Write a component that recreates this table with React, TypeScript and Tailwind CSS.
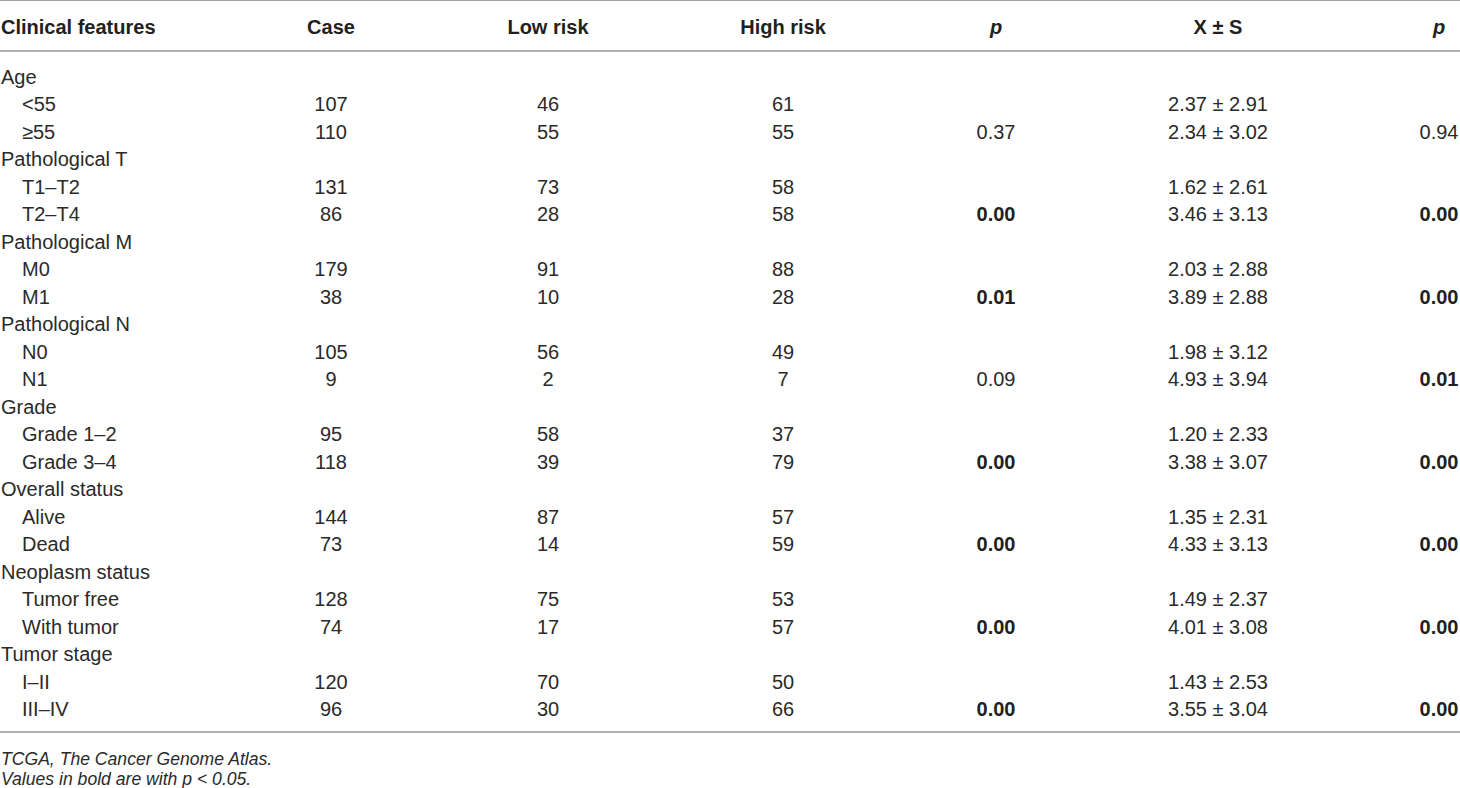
import React from "react";

type Row = {
  label: string;
  sub?: boolean;
  c?: string;
  lo?: string;
  hi?: string;
  p1?: string;
  p1b?: boolean;
  xs?: string;
  p2?: string;
  p2b?: boolean;
};

const rows: Row[] = [
  { label: "Age" },
  { label: "<55", sub: true, c: "107", lo: "46", hi: "61", xs: "2.37 ± 2.91" },
  { label: "≥55", sub: true, c: "110", lo: "55", hi: "55", p1: "0.37", xs: "2.34 ± 3.02", p2: "0.94" },
  { label: "Pathological T" },
  { label: "T1–T2", sub: true, c: "131", lo: "73", hi: "58", xs: "1.62 ± 2.61" },
  { label: "T2–T4", sub: true, c: "86", lo: "28", hi: "58", p1: "0.00", p1b: true, xs: "3.46 ± 3.13", p2: "0.00", p2b: true },
  { label: "Pathological M" },
  { label: "M0", sub: true, c: "179", lo: "91", hi: "88", xs: "2.03 ± 2.88" },
  { label: "M1", sub: true, c: "38", lo: "10", hi: "28", p1: "0.01", p1b: true, xs: "3.89 ± 2.88", p2: "0.00", p2b: true },
  { label: "Pathological N" },
  { label: "N0", sub: true, c: "105", lo: "56", hi: "49", xs: "1.98 ± 3.12" },
  { label: "N1", sub: true, c: "9", lo: "2", hi: "7", p1: "0.09", xs: "4.93 ± 3.94", p2: "0.01", p2b: true },
  { label: "Grade" },
  { label: "Grade 1–2", sub: true, c: "95", lo: "58", hi: "37", xs: "1.20 ± 2.33" },
  { label: "Grade 3–4", sub: true, c: "118", lo: "39", hi: "79", p1: "0.00", p1b: true, xs: "3.38 ± 3.07", p2: "0.00", p2b: true },
  { label: "Overall status" },
  { label: "Alive", sub: true, c: "144", lo: "87", hi: "57", xs: "1.35 ± 2.31" },
  { label: "Dead", sub: true, c: "73", lo: "14", hi: "59", p1: "0.00", p1b: true, xs: "4.33 ± 3.13", p2: "0.00", p2b: true },
  { label: "Neoplasm status" },
  { label: "Tumor free", sub: true, c: "128", lo: "75", hi: "53", xs: "1.49 ± 2.37" },
  { label: "With tumor", sub: true, c: "74", lo: "17", hi: "57", p1: "0.00", p1b: true, xs: "4.01 ± 3.08", p2: "0.00", p2b: true },
  { label: "Tumor stage" },
  { label: "I–II", sub: true, c: "120", lo: "70", hi: "50", xs: "1.43 ± 2.53" },
  { label: "III–IV", sub: true, c: "96", lo: "30", hi: "66", p1: "0.00", p1b: true, xs: "3.55 ± 3.04", p2: "0.00", p2b: true },
];

const grid = "grid grid-cols-[222px_218px_216px_254px_172px_272px_1fr] items-center";

export default function App() {
  return (
    <div
      className="w-[1460px] h-[788px] bg-white text-[#231f20] overflow-hidden"
      style={{ fontFamily: '"Liberation Sans", Arial, sans-serif' }}
    >
      <div className="h-px bg-[#a0a0a0]" />
      <div className={`${grid} h-[49px] text-[20px] font-bold pt-[2px]`}>
        <div className="pl-px">Clinical features</div>
        <div className="text-center">Case</div>
        <div className="text-center">Low risk</div>
        <div className="text-center">High risk</div>
        <div className="text-center italic">p</div>
        <div className="text-center">X ± S</div>
        <div className="flex justify-end">
          <span className="w-[42px] text-center italic">p</span>
        </div>
      </div>
      <div className="h-[2px] bg-[#b0b0b0]" />
      <div className="pt-[11px] pb-[8px] text-[20px] text-[#2a2a2a]">
        {rows.map((r, i) => (
          <div key={i} className={`${grid} h-[27.5px] leading-none`}>
            <div className={r.sub ? "pl-[22px]" : "pl-px"}>{r.label}</div>
            <div className="text-center">{r.c}</div>
            <div className="text-center">{r.lo}</div>
            <div className="text-center">{r.hi}</div>
            <div className={`text-center ${r.p1b ? "font-bold text-[#231f20]" : ""}`}>{r.p1}</div>
            <div className="text-center">{r.xs}</div>
            <div className="flex justify-end">
              <span className={`w-[42px] text-center ${r.p2b ? "font-bold text-[#231f20]" : ""}`}>{r.p2}</span>
            </div>
          </div>
        ))}
      </div>
      <div className="h-[2px] bg-[#b0b0b0]" />
      <div className="pt-[16px] text-[17.6px] italic leading-[20px] text-[#2a2a2a]">
        <div className="pl-px">TCGA, The Cancer Genome Atlas.</div>
        <div className="pl-px">Values in bold are with p &lt; 0.05.</div>
      </div>
    </div>
  );
}
